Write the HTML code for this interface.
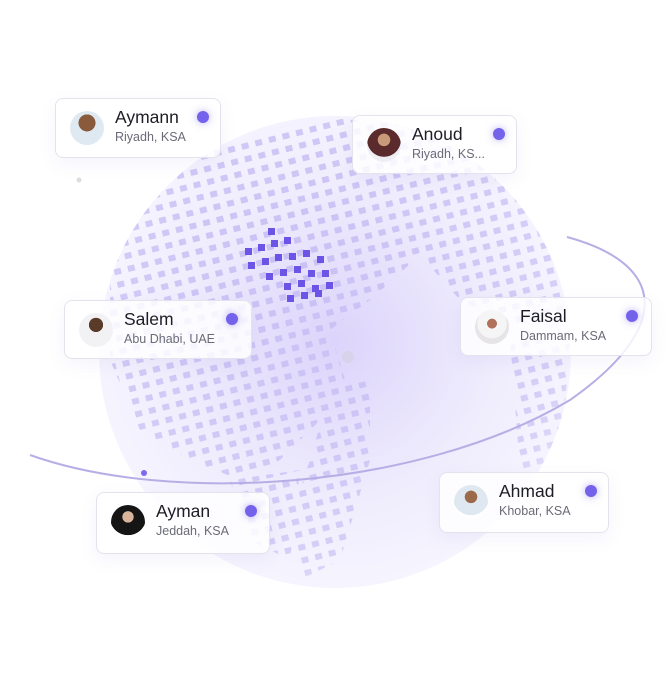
<!DOCTYPE html>
<html><head><meta charset="utf-8"><style>
body{margin:0;width:669px;height:687px;background:#fff;position:relative;overflow:hidden;font-family:"Liberation Sans",sans-serif}
.card{position:absolute;background:rgba(255,255,255,0.82);border:1px solid #e4e2ec;border-radius:8px;box-shadow:0 6px 18px rgba(120,100,200,0.07);box-sizing:border-box}
.av{position:absolute;left:14px;top:12px;width:34px;height:34px;border-radius:50%;overflow:hidden}
.nm{position:absolute;left:59px;top:8px;font-size:17.5px;color:#1d1d25}
.loc{position:absolute;left:59px;top:31px;font-size:12.5px;color:#6b6b78}
.dot{position:absolute;top:12px;width:12px;height:12px;border-radius:50%;background:#7462ea;box-shadow:0 0 8px rgba(116,98,234,.5)}
</style></head><body>
<svg width="669" height="687" style="position:absolute;left:0;top:0">
<defs>
<radialGradient id="g" cx="0.5" cy="0.48" r="0.55">
<stop offset="0" stop-color="#dcd4fb"/><stop offset="0.6" stop-color="#efecfd"/><stop offset="1" stop-color="#f7f6fe"/>
</radialGradient>
<pattern id="p" width="14" height="13" patternUnits="userSpaceOnUse" patternTransform="rotate(-14)">
<rect x="3" y="3" width="7" height="6" fill="#c9c0f4"/>
</pattern>
<clipPath id="c"><circle cx="335" cy="352" r="236"/></clipPath>
<radialGradient id="m" cx="0.45" cy="0.4" r="0.55"><stop offset="0" stop-color="#fff"/><stop offset="0.75" stop-color="#fff" stop-opacity=".7"/><stop offset="1" stop-color="#fff" stop-opacity="0"/></radialGradient>
<mask id="mk"><rect width="669" height="687" fill="url(#m)"/></mask>
</defs>
<circle cx="335" cy="352" r="236" fill="url(#g)"/>
<g clip-path="url(#c)" mask="url(#mk)">
<path d="M110,250 L200,150 L330,118 L470,130 L560,220 L570,310 L520,330 L460,300 L420,255 L370,300 L330,330 L345,380 L320,420 L280,460 L240,480 L190,460 L140,430 L110,360 Z" fill="url(#p)"/>
<path d="M330,390 L370,380 L370,460 L340,560 L300,580 L290,520 L310,460Z" fill="url(#p)"/>
<path d="M510,340 L570,340 L560,470 L520,470Z" fill="url(#p)"/>
<path d="M230,480 L300,470 L290,560 L250,540Z" fill="url(#p)"/>
</g>
<g fill="#6c55e6">
<rect x="268" y="228" width="7" height="7"/><rect x="245" y="248" width="7" height="7"/><rect x="258" y="244" width="7" height="7"/><rect x="271" y="240" width="7" height="7"/><rect x="284" y="237" width="7" height="7"/>
<rect x="248" y="262" width="7" height="7"/><rect x="262" y="258" width="7" height="7"/><rect x="275" y="254" width="7" height="7"/><rect x="289" y="253" width="7" height="7"/><rect x="303" y="250" width="7" height="7"/><rect x="317" y="256" width="7" height="7"/>
<rect x="266" y="273" width="7" height="7"/><rect x="280" y="269" width="7" height="7"/><rect x="294" y="266" width="7" height="7"/><rect x="308" y="270" width="7" height="7"/><rect x="322" y="270" width="7" height="7"/>
<rect x="284" y="283" width="7" height="7"/><rect x="298" y="280" width="7" height="7"/><rect x="312" y="285" width="7" height="7"/><rect x="326" y="282" width="7" height="7"/>
<rect x="287" y="295" width="7" height="7"/><rect x="301" y="292" width="7" height="7"/><rect x="315" y="290" width="7" height="7"/>
</g>
<circle cx="348" cy="357" r="6" fill="#d8d3ea"/>
<circle cx="144" cy="473" r="3" fill="#7b68ee"/>
<circle cx="79" cy="180" r="2.5" fill="#ddd"/>
<path d="M30,455 C170,505 420,490 570,400 C670,330 670,265 567,237" fill="none" stroke="#b8aee6" stroke-width="2"/>
</svg>

<div class="card" style="left:55px;top:98px;width:166px;height:60px">
<div class="av" style="background:radial-gradient(circle at 50% 35%,#8a5a3c 0 30%,#dfe9f2 31%)"></div>
<div class="nm">Aymann</div><div class="loc">Riyadh, KSA</div><div class="dot" style="left:141px"></div></div>

<div class="card" style="left:352px;top:115px;width:165px;height:59px">
<div class="av" style="background:radial-gradient(circle at 50% 35%,#c99a7a 0 22%,#5a2a2c 23% 60%,#f0eef5 61%)"></div>
<div class="nm">Anoud</div><div class="loc">Riyadh, KS...</div><div class="dot" style="left:140px"></div></div>

<div class="card" style="left:64px;top:300px;width:188px;height:59px">
<div class="av" style="background:radial-gradient(circle at 50% 35%,#5a3a28 0 25%,#f2f1f4 26%)"></div>
<div class="nm">Salem</div><div class="loc">Abu Dhabi, UAE</div><div class="dot" style="left:161px"></div></div>

<div class="card" style="left:460px;top:297px;width:192px;height:59px">
<div class="av" style="background:radial-gradient(circle at 50% 40%,#b0705a 0 18%,#f5f5f5 19% 55%,#e6e4e6 56%)"></div>
<div class="nm">Faisal</div><div class="loc">Dammam, KSA</div><div class="dot" style="left:165px"></div></div>

<div class="card" style="left:96px;top:492px;width:174px;height:62px">
<div class="av" style="background:radial-gradient(circle at 50% 35%,#d8b49a 0 20%,#151515 21% 65%,#fff 66%)"></div>
<div class="nm">Ayman</div><div class="loc">Jeddah, KSA</div><div class="dot" style="left:148px"></div></div>

<div class="card" style="left:439px;top:472px;width:170px;height:61px">
<div class="av" style="background:radial-gradient(circle at 50% 35%,#9a6a4a 0 22%,#dfe8f0 23% 65%,#fff 66%)"></div>
<div class="nm">Ahmad</div><div class="loc">Khobar, KSA</div><div class="dot" style="left:145px"></div></div>
</body></html>
